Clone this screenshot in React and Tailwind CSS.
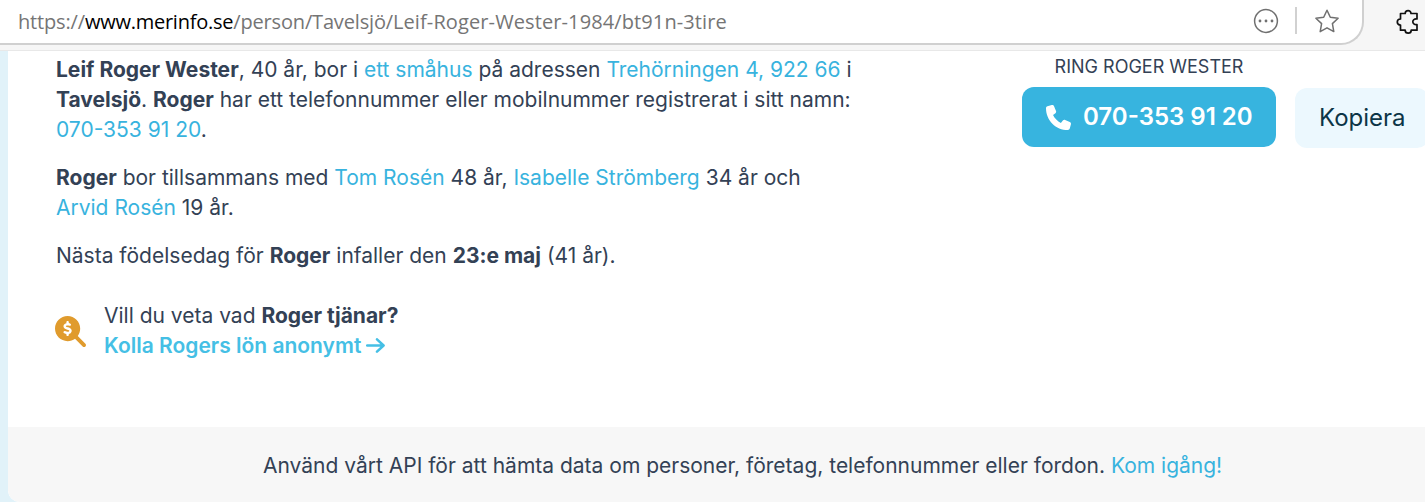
import { FaMagnifyingGlassDollar, FaPhone } from 'react-icons/fa6'

const Link = ({ children }) => (
  <a href="#" className="text-[#38b3de]">{children}</a>
)

const BrowserBar = () => (
  <header className="h-[51px] shrink-0 flex bg-[#f6f6f6] border-b border-[#e8e8e8]">
    <div className="w-[1364px] h-[45px] shrink-0 flex items-start bg-white border-b-2 border-r-2 border-[#d0d0d0] rounded-br-[23px]">
      <p className="ml-[18px] mt-[7px] w-[1235px] font-['Open_Sans',sans-serif] text-[20px] leading-[30px] tracking-[-0.16px] text-[#757575] whitespace-nowrap">
        https://<span className="text-black tracking-[-0.25px]">www.merinfo.se</span>/person/Tavelsjö/
        <span className="tracking-[0.11px]">Leif-Roger-Wester-1984/bt91n-3tire</span>
      </p>
      <svg className="mt-[8px] w-[26px] h-[26px] shrink-0" viewBox="0 0 26 26" fill="none">
        <circle cx="13" cy="13" r="11.4" stroke="#707070" strokeWidth="1.5" />
        <circle cx="7" cy="13" r="1.4" fill="#707070" />
        <circle cx="13" cy="13" r="1.4" fill="#707070" />
        <circle cx="19" cy="13" r="1.4" fill="#707070" />
      </svg>
      <div className="ml-[16px] mt-[7px] w-[2px] h-[27px] bg-[#d1d1d1]"></div>
      <svg className="ml-[17px] mt-[8px] w-[26px] h-[26px] shrink-0" viewBox="0 0 26 26" fill="none" stroke="#707070" strokeWidth="1.5" strokeLinejoin="round">
        <path d="M13 2.2 16.3 9.3 24.1 10.3 18.4 15.6 19.8 23.6 13 19.8 6.2 23.6 7.6 15.6 1.9 10.3 9.7 9.3Z" />
      </svg>
    </div>
    <svg className="ml-[32px] mt-[9px] w-[24px] h-[26px] shrink-0" viewBox="0 0 24 26" fill="none" stroke="#111" strokeWidth="1.7" strokeLinejoin="round">
      <path d="M4.5 4.5H9.2C9.2 0.6 15 0.6 15 4.5H21V10C15.4 9.2 15.4 16.4 21 15.6V21.2H15.2C15.2 25.2 9.2 25.2 9.2 21.2H4.5V16C0.2 16 0.2 10 4.5 10Z" />
    </svg>
  </header>
)

const PersonInfo = () => (
  <div className="w-[966px] shrink-0 pt-[4px] pl-[48px] text-[21px] leading-[30px] whitespace-nowrap">
    <p>
      <b>Leif Roger Wester</b>, 40 år, bor i <Link>ett småhus</Link> på adressen <Link>Trehörningen 4, 922 66</Link> i<br />
      <b>Tavelsjö</b>. <b>Roger</b> har ett telefonnummer eller mobilnummer registrerat i sitt namn:<br />
      <Link>070-353 91 20</Link>.
    </p>
    <p className="mt-[18px]">
      <b>Roger</b> bor tillsammans med <Link>Tom Rosén</Link> 48 år, <Link>Isabelle Strömberg</Link> 34 år och<br />
      <Link>Arvid Rosén</Link> 19 år.
    </p>
    <p className="mt-[18px]">
      Nästa födelsedag för <b>Roger</b> infaller den <b>23:e maj</b> (41 år).
    </p>

    {/* Salary lookup */}
    <div className="mt-[30px] -ml-px flex items-center">
      <FaMagnifyingGlassDollar className="w-[31px] h-[31px] text-[#e09b2d]" />
      <div className="ml-[18px]">
        <p>Vill du veta vad <b>Roger tjänar?</b></p>
        <a href="#" className="flex items-center font-semibold text-[#45bfe5]">
          Kolla Rogers lön anonymt
          <svg className="ml-[5px] w-[19px] h-[16px]" viewBox="0 0 19 16" fill="none" stroke="currentColor" strokeWidth="2.5" strokeLinecap="round" strokeLinejoin="round">
            <path d="M1.2 7.5H17.5M11 1.3 17.6 7.5 11 13.7" />
          </svg>
        </a>
      </div>
    </div>
  </div>
)

const CallPanel = () => (
  <div className="flex shrink-0">
    <div className="ml-[48px] w-[254px]">
      <p className="mt-[4px] h-[32px] text-center text-[18px] leading-[24px] whitespace-nowrap">RING ROGER WESTER</p>
      <button className="w-[254px] h-[60px] flex items-center pl-[24px] rounded-[12px] bg-[#37b4df] text-white text-[24px] font-semibold whitespace-nowrap">
        <FaPhone className="w-[25px] h-[25px] mr-[12px]" />
        070-353 91 20
      </button>
    </div>
    <button className="mt-[37px] ml-[19px] w-[134px] h-[60px] shrink-0 pl-[24px] text-left rounded-[12px] bg-[#ecf8fe] text-[#0c3547] text-[24px]">
      Kopiera
    </button>
  </div>
)

const App = () => {
  return (
    <div className="w-[1425px] h-[502px] overflow-hidden flex flex-col bg-[#e1f2f9] font-['Inter',sans-serif] text-[#334155]">
      <BrowserBar />
      <main className="ml-[8px] h-[451px] shrink-0 flex flex-col bg-white rounded-bl-[12px] overflow-hidden">
        <div className="h-[376px] shrink-0 flex overflow-hidden">
          <PersonInfo />
          <CallPanel />
        </div>
        <footer className="flex-1 rounded-bl-[12px] bg-[#f7f7f7] pl-[255px] pt-[24px] text-[21px] leading-[30px] whitespace-nowrap">
          Använd vårt API för att hämta data om personer, företag, telefonnummer eller fordon. <Link>Kom igång!</Link>
        </footer>
      </main>
    </div>
  )
}

export default App
